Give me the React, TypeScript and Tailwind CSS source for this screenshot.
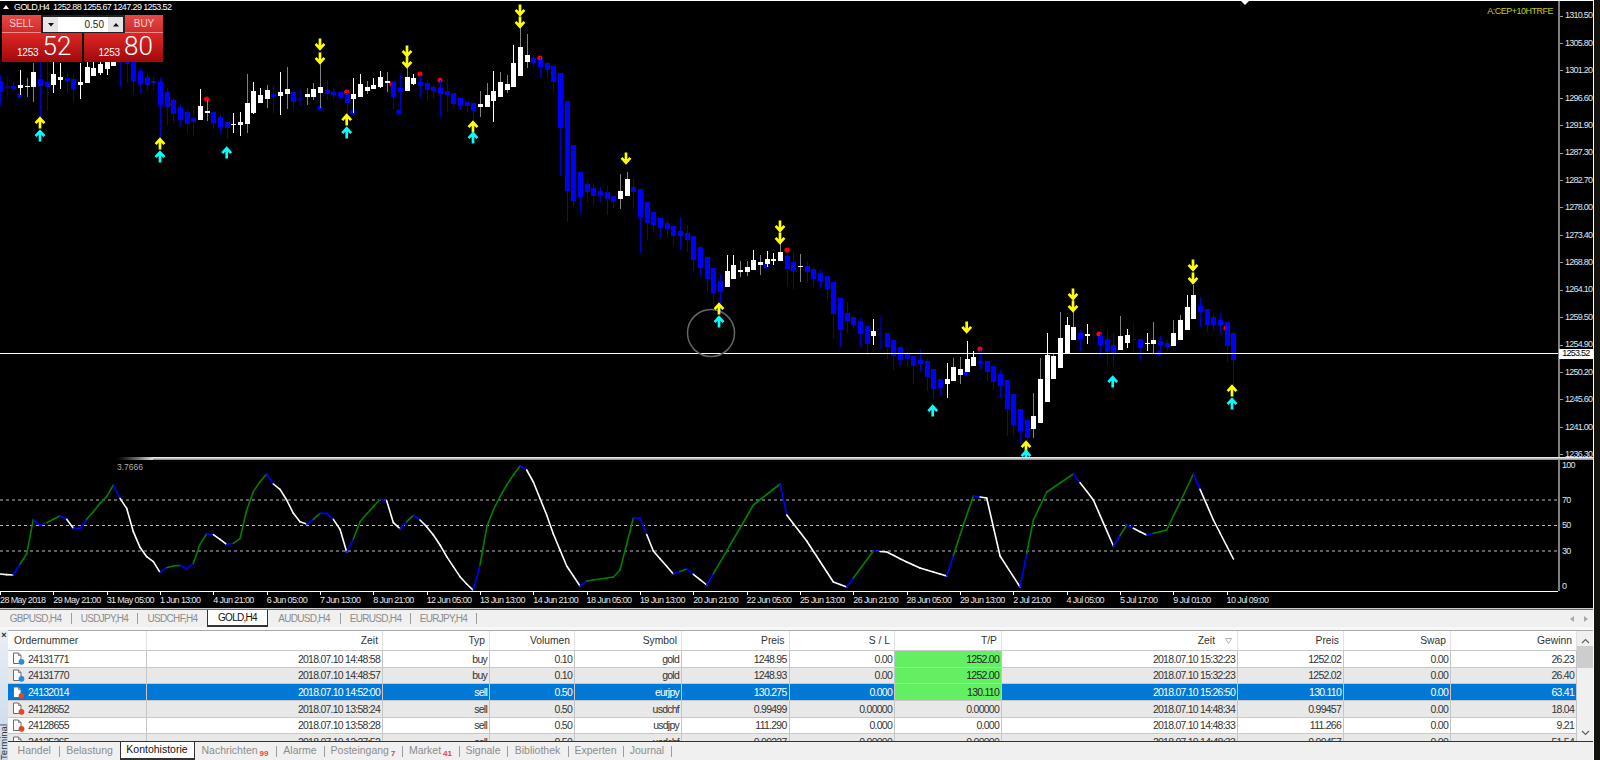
import React from "react";

const SANS = "font-['Liberation_Sans',Arial,sans-serif]";

type C = [string, number, number, number, number];
const candles: C[] = [
  ["b",75,81,92,105],["d",76,86,88,97],["b",81,86,89,92],["w",70,85,88,95],["g",78,86,87,97],["g",63,72,87,102],["b",60,79,86,125],["b",60,82,87,111],
  ["w",62,74,85,93],["w",63,77,80,89],["b",73,78,81,92],["b",75,79,89,102],["w",63,82,85,99],["w",62,67,83,83],["w",62,68,76,76],["w",60,64,73,75],
  ["w",55,58,69,75],["w",50,55,66,66],["b",50,55,62,87],["b",50,55,64,83],["b",55,60,81,93],["b",68,71,84,93],["b",75,77,85,91],["b",77,81,83,90],
  ["b",77,82,105,138],["b",88,92,107,125],["b",98,100,114,123],["b",105,107,120,126],["b",110,112,124,133],["b",105,118,122,136],["w",89,106,120,120],["g",100,111,113,121],
  ["b",112,112,123,129],["b",115,117,127,133],["b",122,122,128,139],["w",113,124,125,133],["w",112,122,125,136],["g",74,103,124,133],["w",82,91,113,114],["w",88,95,103,103],
  ["g",85,90,99,108],["b",85,94,97,113],["w",72,92,96,115],["g",67,89,94,109],["b",92,92,102,109],["d",90,98,99,105],["g",88,94,97,105],["g",83,89,97,100],
  ["g",62,87,93,108],["b",80,90,94,100],["b",88,92,95,100],["b",92,92,97,100],["b",92,93,103,115],["w",78,94,99,113],["w",74,84,97,97],["g",81,87,91,94],
  ["w",78,85,89,89],["w",71,77,87,88],["g",72,81,83,92],["b",82,82,97,109],["b",73,88,92,112],["g",60,77,91,91],["w",74,78,84,85],["b",75,82,86,98],
  ["b",80,83,90,100],["b",85,87,91,99],["b",80,88,94,117],["b",79,91,95,112],["b",93,93,104,108],["b",98,98,106,110],["b",102,102,106,112],["b",103,103,111,125],
  ["g",91,104,107,117],["g",83,95,107,107],["w",71,91,101,122],["g",72,82,97,97],["g",75,84,90,93],["w",45,63,87,87],["g",27,47,76,76],["g",34,55,62,68],
  ["b",55,58,63,68],["b",57,60,67,77],["b",62,63,70,77],["b",66,66,82,93],["b",73,73,128,176],["b",101,101,191,222],["b",145,145,201,207],["b",172,172,197,213],
  ["b",182,184,192,202],["b",183,188,196,206],["b",187,191,195,202],["b",186,192,199,215],["b",196,196,202,208],["g",174,191,199,209],["g",172,179,196,196],["b",178,187,192,207],
  ["b",189,189,217,253],["b",202,202,223,240],["b",212,212,225,232],["b",218,218,228,238],["b",220,223,229,238],["b",226,226,236,246],["b",217,231,236,250],["b",225,233,240,252],
  ["b",236,236,260,271],["b",247,247,268,276],["b",257,257,279,292],["b",268,268,293,304],["b",274,281,292,313],["w",255,271,287,287],["w",255,265,279,279],["g",261,270,272,277],
  ["g",261,267,272,276],["w",250,260,270,270],["g",255,262,265,275],["w",251,259,264,267],["w",253,259,261,265],["g",243,252,261,261],["b",252,256,269,286],["b",252,262,271,289],
  ["g",254,266,267,282],["b",261,266,272,283],["b",267,269,279,287],["b",270,273,281,288],["b",276,276,289,300],["b",282,282,314,339],["b",298,298,330,347],["b",302,313,321,333],
  ["b",317,317,325,328],["b",318,321,334,347],["b",326,326,344,355],["w",319,331,336,345],["d",315,333,334,349],["b",333,333,347,359],["b",340,340,356,370],["b",347,347,360,365],
  ["b",351,353,359,367],["b",356,356,366,384],["b",349,360,364,371],["b",358,361,377,391],["b",369,369,389,399],["b",379,379,388,395],["w",363,379,384,398],["g",358,367,381,381],
  ["g",357,369,375,384],["w",341,359,372,372],["w",351,357,366,366],["b",350,361,363,370],["b",361,361,372,381],["b",366,366,382,390],["b",370,374,386,398],["b",380,380,409,436],
  ["b",394,394,425,436],["b",409,409,431,444],["b",420,420,438,447],["g",393,416,429,438],["g",358,379,423,423],["w",333,355,402,402],["g",353,356,379,379],["g",312,338,368,368],
  ["w",317,325,353,353],["g",300,327,340,340],["b",330,333,339,351],["w",324,334,336,344],["d",327,335,336,342],["b",333,336,345,355],["b",330,339,352,365],["b",333,345,353,367],
  ["g",316,336,350,350],["w",329,335,343,348],["d",322,339,340,354],["b",339,339,348,359],["w",333,343,344,351],["g",322,340,344,353],["b",336,341,345,353],["b",340,343,347,351],
  ["g",320,333,346,346],["g",315,320,340,340],["w",295,307,330,330],["g",285,295,319,319],["b",297,306,312,327],["b",309,309,325,332],["b",313,317,325,331],["b",313,320,325,333],
  ["b",322,322,346,362],["b",333,333,360,385],
];

const dots: [number, number, string][] = [
  [19.5,95.5,"#0000ff"],[173,104,"#ff0000"],[206.7,99,"#ff0000"],[320,108,"#0000ff"],[346.7,92,"#ff0000"],[352.7,112,"#0000ff"],[392,84,"#ff0000"],[399,112,"#0000ff"],
  [420,74,"#ff0000"],[440,80,"#ff0000"],[540,58,"#ff0000"],[766,266,"#0000ff"],[787,250,"#ff0000"],[966,373,"#0000ff"],[980,349,"#ff0000"],[1099,334,"#ff0000"],[1159,353,"#0000ff"],[1226,328,"#ff0000"],
];

const arrows: [number, number, "u" | "c" | "d"][] = [
  [40,122,"u"],[40,135,"c"],[160,143,"u"],[160,156,"c"],[226.7,152,"c"],[320,45,"d"],[320,59,"d"],[346.7,119,"u"],[346.7,132,"c"],[407,52,"d"],[407,63,"d"],
  [473,126,"u"],[473,137,"c"],[520,11,"d"],[520,23,"d"],[626,159,"d"],[719,308,"u"],[719,321,"c"],[780,227,"d"],[780,239,"d"],[932.7,410,"c"],[966.7,328,"d"],
  [1026,446,"u"],[1026,455,"c"],[1073,295,"d"],[1073,307,"d"],[1112.7,381,"c"],[1193,266,"d"],[1193,279,"d"],[1232,390,"u"],[1232,403,"c"],
];

const zoomLine = [402,404,405,372,342,238,256,248,238,228,238,265,265,238,215,190,170,135,175,205,275,322,350,365,397,383,378,376,386,370,313,282,284,298,313,310,296,210,155,125,102,132,148,180,220,245,252,238,220,220,238,268,336,297,245,222,200,178,182,248,266,245,226,240,260,285,315,350,380,410,432,451,375,262,210,170];
const keyLine: [number, number][] = [[76,485],[77,475],[78,466],[79,470],[80,482],[82,515],[83,534],[85,566],[87,586],[88,581],[90,579],[92,577],[93,570],[95,518],[96,518],[98,551],[101,574],[103,569],[106,585],[109,551],[113,505],[117,484],[118,515],[121,541],[125,582],[127,587],[131,551],[133,552],[136,562],[138,568],[142,576],[144,535],[145,515],[146,496],[148,498],[150,556],[153,587],[155,520],[157,492],[161,474],[164,500],[167,546],[169,525],[172,535],[175,530],[179,474],[182,520],[185,559]];

function linePoints(): [number, number][] {
  const pts: [number, number][] = zoomLine.map((z, i) => [i * 6.667, 440 + z / 3]);
  let prevK = 75;
  let prevY = 440 + 170 / 3;
  keyLine.forEach(([k, y]) => {
    for (let j = prevK + 1; j <= k; j++) {
      const t = (j - prevK) / (k - prevK);
      pts.push([j * 6.667, prevY + (y - prevY) * t]);
    }
    prevK = k;
    prevY = y;
  });
  return pts;
}

function Arrow({ x, y, kind }: { x: number; y: number; kind: "u" | "c" | "d" }) {
  const col = kind === "c" ? "#00ffff" : "#ffff00";
  const s = kind === "d" ? -1 : 1;
  return (
    <path
      stroke={col}
      strokeWidth={2.7}
      fill="none"
      d={`M${x} ${y - 4 * s}V${y + 6.5 * s}M${x - 4.4} ${y + 1.2 * s}L${x} ${y - 3.8 * s}L${x + 4.4} ${y + 1.2 * s}`}
    />
  );
}

function MainChart() {
  return (
    <svg width={1558} height={456} viewBox="0 1 1558 456" className="block">
      {dots.map(([x, y, c], i) => (
        <circle key={i} cx={x} cy={y} r={2.6} fill={c} />
      ))}
      {candles.map(([t, hi, top, bot, lo], k) => {
        const x = Math.round(k * 6.667);
        const white = t === "w" || t === "g";
        const wick = t === "w" ? "#ffffff" : t === "g" ? "#808080" : t === "d" ? "#000090" : "#0000d0";
        return (
          <g key={k} shapeRendering="crispEdges">
            <rect x={x} y={hi} width={1} height={lo - hi} fill={wick} />
            <rect x={x - 2} y={top} width={5} height={Math.max(bot - top, 1)} fill={white ? "#ffffff" : t === "d" ? "#000090" : "#0000ff"} />
          </g>
        );
      })}
      <line x1={0} x2={1558} y1={353.5} y2={353.5} stroke="#ffffff" strokeWidth={1} />
      <circle cx={711} cy={333} r={23.5} fill="none" stroke="#66666a" strokeWidth={1.5} />
      {arrows.map(([x, y, k], i) => (
        <Arrow key={i} x={x} y={y} kind={k} />
      ))}
      <polygon points="1241,1 1249,1 1245,5" fill="#ffffff" />
    </svg>
  );
}

function Indicator() {
  const pts = linePoints();
  const segs: React.ReactElement[] = [];
  for (let i = 1; i < pts.length; i++) {
    const dy = pts[i][1] - pts[i - 1][1];
    const prevDy = i > 1 ? pts[i - 1][1] - pts[i - 2][1] : dy;
    const turned = Math.sign(dy) !== Math.sign(prevDy);
    const col = turned ? "#0000ff" : dy < 0 ? "#008000" : "#ffffff";
    segs.push(
      <line key={i} x1={pts[i - 1][0]} y1={pts[i - 1][1]} x2={pts[i][0]} y2={pts[i][1]} stroke={col} strokeWidth={1.6} strokeLinecap="round" />
    );
  }
  return (
    <svg width={1558} height={131} viewBox="0 460 1558 131" className="block">
      {[500, 525.5, 551].map((y) => (
        <line key={y} x1={0} x2={1558} y1={y} y2={y} stroke="#bdbdbd" strokeWidth={1} strokeDasharray="3 3" />
      ))}
      {segs}
    </svg>
  );
}

const prices = ["1310.50","1305.80","1301.20","1296.60","1291.90","1287.30","1282.70","1278.00","1273.40","1268.80","1264.10","1259.50","1254.90","1250.20","1245.60","1241.00","1236.30"];
const times = ["28 May 2018","29 May 21:00","31 May 05:00","1 Jun 13:00","4 Jun 21:00","6 Jun 05:00","7 Jun 13:00","8 Jun 21:00","12 Jun 05:00","13 Jun 13:00","14 Jun 21:00","18 Jun 05:00","19 Jun 13:00","20 Jun 21:00","22 Jun 05:00","25 Jun 13:00","26 Jun 21:00","28 Jun 05:00","29 Jun 13:00","2 Jul 21:00","4 Jul 05:00","5 Jul 17:00","9 Jul 01:00","10 Jul 09:00"];

const AXIS = `text-[9px] tracking-[-0.75px] text-[#dce6ee] ${SANS}`;

function AxisLabel({ text, mt }: { text: string; mt: string }) {
  return (
    <div className={`h-0 flex items-center gap-[2px] whitespace-nowrap ${mt}`}>
      <span className="w-[3px] h-px bg-[#9a9a9a]" />
      <span>{text}</span>
    </div>
  );
}

function TradePanel() {
  return (
    <div className={`absolute left-[2px] top-[14px] w-[161px] flex flex-col ${SANS}`}>
      <div className="flex h-[18px]">
        <div className="w-[39px] bg-gradient-to-b from-[#e64a45] to-[#cf2a2a] flex items-center justify-center text-[10px] text-[#ffd0d0] border-b border-[#ee8a8a]">SELL</div>
        <div className="w-[84px] h-[19px] bg-[#222] p-[2px] flex">
          <div className="w-[15px] bg-[#e6e6e6] flex items-center justify-center">
            <svg width="6" height="4"><polygon points="0,0 6,0 3,3.5" fill="#111" /></svg>
          </div>
          <div className="flex-1 bg-white flex items-center justify-end pr-[4px] text-[10px] text-[#222]">0.50</div>
          <div className="w-[15px] bg-[#e6e6e6] flex items-center justify-center">
            <svg width="6" height="4"><polygon points="0,3.5 6,3.5 3,0" fill="#111" /></svg>
          </div>
        </div>
        <div className="w-[38px] bg-gradient-to-b from-[#e64a45] to-[#cf2a2a] flex items-center justify-center text-[10px] text-[#ffd0d0] border-b border-[#ee8a8a]">BUY</div>
      </div>
      <div className="flex gap-[2px] h-[29px] text-white">
        <div className="w-[79.5px] bg-gradient-to-b from-[#df2626] to-[#a00808] flex items-end pl-[15px] pb-[4px]">
          <span className="text-[10px] font-medium leading-[11px] tracking-[-0.2px] mr-[4px]">1253</span>
          <span className="font-['Roboto',sans-serif] font-light text-[26px] leading-[24px]">52</span>
        </div>
        <div className="w-[79.5px] bg-gradient-to-b from-[#df2626] to-[#a00808] flex items-end pl-[15px] pb-[4px]">
          <span className="text-[10px] font-medium leading-[11px] tracking-[-0.2px] mr-[4px]">1253</span>
          <span className="font-['Roboto',sans-serif] font-light text-[26px] leading-[24px]">80</span>
        </div>
      </div>
    </div>
  );
}

function Tab({ w, label, active, sup, last, size }: { w: string; label: string; active?: boolean; sup?: string; last?: boolean; size: string }) {
  if (active) {
    return (
      <div className={`${w} bg-white border-x border-[#333] border-b-2 flex items-center justify-center text-[#111] ${size}`}>{label}</div>
    );
  }
  return (
    <div className={`${w} flex items-center`}>
      <div className={`flex-1 flex items-center justify-center text-[#8c8c8c] ${size}`}>
        {label}
        {sup && <span className="text-[8px] font-bold text-[#f53b3b] ml-[2px] mt-[5px] leading-[8px]">{sup}</span>}
      </div>
      {!last && <span className="w-px h-[11px] bg-[#9c9c9c]" />}
    </div>
  );
}

const cols = "grid grid-cols-[139px_236px_107px_85px_107px_107.5px_105.5px_107px_236px_106px_107px_126px]";

const rows = [
  ["24131771","2018.07.10 14:48:58","buy","0.10","gold","1248.95","0.00","1252.00","2018.07.10 15:32:23","1252.02","0.00","26.23"],
  ["24131770","2018.07.10 14:48:57","buy","0.10","gold","1248.93","0.00","1252.00","2018.07.10 15:32:23","1252.02","0.00","26.40"],
  ["24132014","2018.07.10 14:52:00","sell","0.50","eurjpy","130.275","0.000","130.110","2018.07.10 15:26:50","130.110","0.00","63.41"],
  ["24128652","2018.07.10 13:58:24","sell","0.50","usdchf","0.99499","0.00000","0.00000","2018.07.10 14:48:34","0.99457","0.00","18.04"],
  ["24128655","2018.07.10 13:58:28","sell","0.50","usdjpy","111.290","0.000","0.000","2018.07.10 14:48:33","111.266","0.00","9.21"],
  ["24125265","2018.07.10 12:27:52","sell","0.50","usdchf","0.99227","0.00000","0.00000","2018.07.10 14:48:33","0.99457","0.00","51.54"],
];
const headers = ["Ordernummer","Zeit","Typ","Volumen","Symbol","Preis","S / L","T/P","Zeit","Preis","Swap","Gewinn"];

function OrderIcon({ buy }: { buy: boolean }) {
  return (
    <svg width="13" height="13" viewBox="0 0 13 13" className="shrink-0">
      <path d="M1.5 1H6.5L9 3.5V11.5H1.5Z" fill="#ffffff" stroke="#6b6b6b" strokeWidth="1" />
      <path d="M6.5 1V3.5H9" fill="none" stroke="#6b6b6b" strokeWidth="0.8" />
      <circle cx="9.5" cy="9.8" r="2.9" fill={buy ? "#2a8bd8" : "#e0481e"} />
    </svg>
  );
}

function Table() {
  return (
    <div className="flex-1 flex flex-col overflow-hidden">
      <div className={`${cols} h-[21px] shrink-0 bg-white border-t border-[#a8a8a8] border-b border-b-[#c8c8c8] text-[10.3px] text-[#333] ${SANS}`}>
        {headers.map((h, i) => (
          <div key={i} className={`flex items-center border-r border-[#e2e2e2] ${i === 0 ? "pl-[6px]" : "justify-end pr-[4px]"}`}>
            {h}
            {i === 8 && (
              <svg width="7" height="6" className="ml-[10px] mr-[1px]"><polygon points="0.5,0.5 6.5,0.5 3.5,5.5" fill="none" stroke="#b5b5b5" /></svg>
            )}
          </div>
        ))}
      </div>
      {rows.map((r, ri) => {
        const sel = ri === 2;
        const bg = sel ? "bg-[#0078d7] text-white" : ri % 2 ? "bg-[#e8e8e8] text-[#333]" : "bg-white text-[#333]";
        return (
          <div key={ri} className={`${cols} h-[16.67px] shrink-0 border-b border-[#c8c8c8] text-[10.5px] tracking-[-0.75px] ${SANS} ${bg}`}>
            {r.map((v, i) => {
              const tp = i === 7 && ri < 3;
              return (
                <div key={i} className={`flex items-center border-r border-[#c6c6c6] leading-none ${i === 0 ? "pl-[4px] gap-[3px]" : "justify-end pr-[2px]"} ${tp ? "bg-[#62f062] text-[#222]" : ""}`}>
                  {i === 0 && <OrderIcon buy={ri < 2} />}
                  {v}
                </div>
              );
            })}
          </div>
        );
      })}
    </div>
  );
}

export default function App() {
  const bottomSize = `text-[10.5px] ${SANS}`;
  const topSize = `text-[10px] tracking-[-0.7px] ${SANS}`;
  return (
    <div className="w-[1600px] h-[760px] overflow-hidden bg-black flex">
      <div className="w-[1594px] border-r border-white flex flex-col">
        {/* price chart */}
        <div className="relative flex h-[457px] border-t border-white">
          <div className="w-[1558px] h-[456px] overflow-hidden">
            <MainChart />
          </div>
          <div className={`w-[35px] border-l-2 border-[#808080] flex flex-col ${AXIS}`}>
            {prices.map((p, i) => (
              <AxisLabel key={p} text={p} mt={i === 0 ? "mt-[15px]" : "mt-[27.43px]"} />
            ))}
          </div>
          <div className={`absolute left-[3px] top-0 leading-[12px] flex items-center gap-[5px] text-[9px] tracking-[-0.62px] text-white ${SANS}`}>
            <svg width="6" height="4"><polygon points="0,4 6,4 3,0" fill="#ffffff" /></svg>
            <span>GOLD,H4&nbsp;&nbsp;1252.88&nbsp;1255.67&nbsp;1247.29&nbsp;1253.52</span>
          </div>
          <div className={`absolute right-[40px] top-[4px] leading-[12px] text-[9px] tracking-[-0.5px] text-[#c6d000] ${SANS}`}>A:CEP+10HTRFE</div>
          <TradePanel />
          <div className={`absolute right-0 top-[348px] w-[34px] h-[10px] bg-white text-black flex items-center justify-center text-[9px] tracking-[-0.75px] ${SANS}`}>1253.52</div>
        </div>
        {/* separator */}
        <div className="flex h-[3px]">
          <div className="w-[113px] bg-black" />
          <div className="w-[40px] bg-gradient-to-r from-black to-[#dddddd]" />
          <div className="flex-1 bg-gradient-to-b from-white to-[#808080]" />
        </div>
        {/* indicator */}
        <div className="relative flex h-[131px]">
          <Indicator />
          <div className={`w-[35px] border-l-2 border-[#808080] flex flex-col ${AXIS}`}>
            <div className="h-0 mt-[6px] flex items-center pl-[2px]">100</div>
            <div className="h-0 mt-[34.5px] flex items-center pl-[2px]">70</div>
            <div className="h-0 mt-[25.5px] flex items-center pl-[2px]">50</div>
            <div className="h-0 mt-[25.5px] flex items-center pl-[2px]">30</div>
            <div className="h-0 mt-[35px] flex items-center pl-[2px]">0</div>
          </div>
          <div className={`absolute left-[117px] top-[1px] leading-[12px] text-[8.5px] text-[#b0b0b0] ${SANS}`}>3.7666</div>
        </div>
        {/* time axis */}
        <div className={`h-[17px] border-t border-white mr-[35px] flex text-[9px] tracking-[-0.6px] text-[#e6e6e6] ${SANS}`}>
          {times.map((t) => (
            <div key={t} className="w-[53.33px] shrink-0 flex">
              <span className="w-px h-[3px] bg-white" />
              <span className="-ml-px pt-[2px] whitespace-nowrap">{t}</span>
            </div>
          ))}
        </div>
        {/* chart tabs */}
        <div className="h-[2px] bg-gradient-to-b from-white to-[#444]" />
        <div className="h-[17px] bg-[#f0f0f0] flex items-stretch">
          <Tab size={topSize} w="w-[72px]" label="GBPUSD,H4" />
          <Tab size={topSize} w="w-[66px]" label="USDJPY,H4" />
          <Tab size={topSize} w="w-[69px]" label="USDCHF,H4" last />
          <Tab size={topSize} w="w-[61px]" label="GOLD,H4" active />
          <Tab size={topSize} w="w-[73px]" label="AUDUSD,H4" />
          <Tab size={topSize} w="w-[70px]" label="EURUSD,H4" />
          <Tab size={topSize} w="w-[66px]" label="EURJPY,H4" />
          <div className="flex-1 flex items-center justify-end gap-[10px] pr-[5px]">
            <svg width="4" height="6"><polygon points="4,0 4,6 0,3" fill="#a8a8a8" /></svg>
            <svg width="4" height="6"><polygon points="0,0 0,6 4,3" fill="#a8a8a8" /></svg>
          </div>
        </div>
        <div className="h-[3px] bg-[#f8f8f8]" />
        {/* terminal */}
        <div className="h-[130px] flex bg-[#f0f0f0]">
          <div className="w-[8px] bg-gradient-to-b from-[#e8eef5] to-[#c9d8ea] flex flex-col items-center justify-between overflow-hidden">
            <span className={`text-[9px] font-bold leading-[9px] mt-[1px] text-[#222] ${SANS}`}>×</span>
            <span className={`[writing-mode:vertical-rl] rotate-180 text-[9.5px] leading-[8px] text-[#333] ${SANS}`}>Terminal</span>
          </div>
          <div className="flex-1 flex flex-col">
            <div className="h-[111px] flex overflow-hidden">
              <Table />
              <div className="w-[16px] bg-[#f0f0f0] border-t border-[#a8a8a8] flex flex-col items-center">
                <svg width="9" height="6" className="mt-[7px]"><path d="M1 5L4.5 1.5L8 5" fill="none" stroke="#606060" strokeWidth="1.2" /></svg>
                <div className="w-full h-[22px] bg-[#cdcdcd] mt-[2px] shrink-0" />
                <svg width="9" height="6" className="mt-[62px]"><path d="M1 1L4.5 4.5L8 1" fill="none" stroke="#606060" strokeWidth="1.2" /></svg>
              </div>
            </div>
            <div className="h-[19px] bg-[#f0f0f0] border-t border-[#333] flex items-stretch pl-[2px]">
              <Tab size={bottomSize} w="w-[49.5px]" label="Handel" />
              <Tab size={bottomSize} w="w-[60px]" label="Belastung" last />
              <Tab size={bottomSize} w="w-[75px]" label="Kontohistorie" active />
              <Tab size={bottomSize} w="w-[82px]" label="Nachrichten" sup="99" />
              <Tab size={bottomSize} w="w-[48px]" label="Alarme" />
              <Tab size={bottomSize} w="w-[78px]" label="Posteingang" sup="7" />
              <Tab size={bottomSize} w="w-[57px]" label="Market" sup="41" />
              <Tab size={bottomSize} w="w-[48px]" label="Signale" />
              <Tab size={bottomSize} w="w-[61px]" label="Bibliothek" />
              <Tab size={bottomSize} w="w-[55px]" label="Experten" />
              <Tab size={bottomSize} w="w-[48px]" label="Journal" />
            </div>
          </div>
        </div>
      </div>
      <div className="flex-1 bg-[#15130f]" />
    </div>
  );
}
